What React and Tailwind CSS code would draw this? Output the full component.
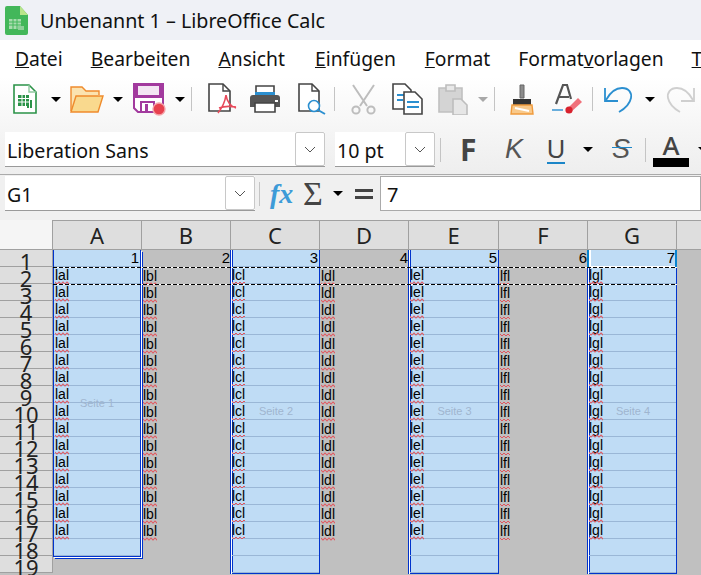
const COLS = [
  { id: 'A', w: 'w-[89px]', num: 1, page: 18, txt: 'lal', label: 'Seite 1' },
  { id: 'B', w: 'w-[89px]', num: 2, txt: 'lbl' },
  { id: 'C', w: 'w-[89px]', num: 3, page: 19, txt: 'lcl', label: 'Seite 2' },
  { id: 'D', w: 'w-[89px]', num: 4, txt: 'ldl' },
  { id: 'E', w: 'w-[90px]', num: 5, page: 19, txt: 'lel', label: 'Seite 3' },
  { id: 'F', w: 'w-[89px]', num: 6, txt: 'lfl' },
  { id: 'G', w: 'w-[89px]', num: 7, page: 19, txt: 'lgl', label: 'Seite 4', active: true },
]

const ROWS = Array.from({ length: 19 }, (_, i) => i + 1)

const Arrow = ({ className = '', color = 'border-t-black' }) => (
  <span className={`h-0 w-0 shrink-0 border-x-[5px] border-t-[5px] border-x-transparent ${color} ${className}`} />
)

const Sep = ({ className = '' }) => <span className={`h-[24px] w-px shrink-0 bg-[#c4c4c4] ${className}`} />

function Chevron() {
  return (
    <svg width="12" height="7" viewBox="0 0 12 7" fill="none" stroke="#555" strokeWidth="1">
      <path d="M1 1l5 5 5-5" />
    </svg>
  )
}

function Combo({ value, className }) {
  return (
    <div className={`flex h-[35px] shrink-0 items-stretch border-b border-[#9a9a9a] bg-white ${className}`}>
      <span className="flex-1 pl-[2px] text-[19.6px] leading-[38px] text-[#111]">{value}</span>
      <span className="flex w-[30px] items-center justify-center rounded-[2px] border border-[#c8c8c8] bg-white">
        <Chevron />
      </span>
    </div>
  )
}

function CalcLogo() {
  return (
    <svg width="23" height="29" viewBox="0 0 23 29" className="shrink-0">
      <path d="M2 0h13l8 9v18a2 2 0 0 1-2 2H2a2 2 0 0 1-2-2V2a2 2 0 0 1 2-2z" fill="#43b75a" />
      <path d="M15 0l8 9h-8z" fill="#b9e58a" />
      <path d="M4 13h12v10H4z" fill="#a8dcae" />
      <path d="M4 16h12M4 19h12M8 13v10M12 13v10" stroke="#43b75a" strokeWidth="1" />
      <path d="M13 20h6v4h-6z" fill="#8fd09a" />
    </svg>
  )
}

function NewCalc() {
  return (
    <svg width="25" height="30" viewBox="0 0 25 30" fill="none" className="shrink-0">
      <path d="M1 1h15l7 7v21H1z" fill="#fff" stroke="#2b9348" strokeWidth="1.6" />
      <path d="M16 1v7h7" stroke="#8fc89e" strokeWidth="1.4" />
      <path d="M5 11h11v11H5z" fill="#2b9348" />
      <path d="M5 14.5h11M5 18h11M9 11v11M12.5 11v11" stroke="#fff" />
      <path d="M14 24v-5h2v5zM17 24v-8h2v8z" fill="#2b9348" />
    </svg>
  )
}

function Folder() {
  return (
    <svg width="34" height="28" viewBox="0 0 34 28" fill="none" className="shrink-0">
      <path d="M1 26V2h11l4 4h13v4" stroke="#ef8b2c" strokeWidth="1.4" fill="#fbe3b0" />
      <path d="M1 27L6 11h27l-5 16z" fill="#f9d98e" stroke="#ef8b2c" strokeWidth="1.4" />
    </svg>
  )
}

function Save() {
  return (
    <svg width="33" height="33" viewBox="0 0 33 33" fill="none" className="shrink-0">
      <path d="M1 1h29v28H5l-4-4z" fill="#fff" stroke="#a23a9e" strokeWidth="2" />
      <path d="M1 1h29v14H1z" fill="#a23a9e" />
      <path d="M5 3h21v9H5z" fill="#f3e6f3" />
      <path d="M8 19h13v10H8z" stroke="#a23a9e" strokeWidth="2" />
      <path d="M12 21h3v7h-3z" fill="#a23a9e" />
      <circle cx="26" cy="26" r="6" fill="#e8414e" stroke="#f4a3a8" strokeWidth="1.4" />
    </svg>
  )
}

function Pdf() {
  return (
    <svg width="30" height="32" viewBox="0 0 30 32" fill="none" className="shrink-0">
      <path d="M2 1h14l7 7v20H2z" fill="#fff" stroke="#444" strokeWidth="1.6" />
      <path d="M16 1v7h7" stroke="#444" strokeWidth="1.4" />
      <path d="M19 12c-1 7-4 13-8 18M19 12c1 7 4 11 10 13M12 25c5-2 11-2 17-1" stroke="#e8495a" strokeWidth="1.6" />
    </svg>
  )
}

function Printer() {
  return (
    <svg width="32" height="28" viewBox="0 0 32 28" fill="none" className="shrink-0">
      <path d="M7 1h18v9H7z" fill="#fff" stroke="#444" strokeWidth="1.6" />
      <path d="M6 7h20v4H6z" fill="#2b8fd0" />
      <path d="M1 13a3 3 0 0 1 3-3h24a3 3 0 0 1 3 3v9H1z" fill="#555" />
      <path d="M6 18h20v9H6z" fill="#fff" stroke="#444" strokeWidth="1.6" />
      <path d="M26 15h3v2h-3z" fill="#fff" />
    </svg>
  )
}

function Preview() {
  return (
    <svg width="30" height="32" viewBox="0 0 30 32" fill="none" className="shrink-0">
      <path d="M2 1h13l7 7v20H2z" fill="#fff" stroke="#444" strokeWidth="1.6" />
      <path d="M15 1v7h7" stroke="#444" strokeWidth="1.4" />
      <circle cx="17" cy="23" r="5.5" fill="#fff" stroke="#2b8fd0" strokeWidth="1.6" />
      <path d="M21 27l7 4" stroke="#2b8fd0" strokeWidth="2" />
    </svg>
  )
}

function Scissors() {
  return (
    <svg width="25" height="31" viewBox="0 0 25 31" fill="none" stroke="#bdbdbd" strokeWidth="2" className="shrink-0">
      <path d="M2 1l14 21M23 1L9 22" />
      <circle cx="5" cy="26" r="3.6" />
      <circle cx="20" cy="26" r="3.6" />
    </svg>
  )
}

function Copy() {
  return (
    <svg width="31" height="32" viewBox="0 0 31 32" fill="none" className="shrink-0">
      <path d="M1 1h12l6 6v19H1z" fill="#fff" stroke="#444" strokeWidth="1.6" />
      <path d="M5 12h9M5 17h6" stroke="#2b8fd0" strokeWidth="2" />
      <path d="M12 9h11l7 7v15H12z" fill="#fff" stroke="#444" strokeWidth="1.6" />
      <path d="M15 19h12M15 24h12" stroke="#2b8fd0" strokeWidth="2" />
    </svg>
  )
}

function Paste() {
  return (
    <svg width="30" height="31" viewBox="0 0 30 31" fill="none" className="shrink-0">
      <path d="M1 4h23v24H1z" fill="#d4d4d4" stroke="#c0c0c0" strokeWidth="1.6" />
      <path d="M8 1h9v6H8z" fill="#e8e8e8" stroke="#bdbdbd" strokeWidth="1.6" />
      <path d="M15 15h8l6 6v10H15z" fill="#e6e6e6" stroke="#bdbdbd" strokeWidth="1.6" />
    </svg>
  )
}

function Brush() {
  return (
    <svg width="24" height="31" viewBox="0 0 24 31" fill="none" className="shrink-0">
      <path d="M10 1h4v13h-4z" fill="#8c8c8c" stroke="#666" />
      <path d="M3 15h18v6H3z" fill="#333" />
      <path d="M2 21h20l1 9H1z" fill="#f9c98a" stroke="#ef9a3c" strokeWidth="1.4" />
      <path d="M5 24l14 3" stroke="#fff" strokeWidth="2" />
    </svg>
  )
}

function ClearFormat() {
  return (
    <svg width="31" height="32" viewBox="0 0 31 32" fill="none" className="shrink-0">
      <path d="M4 21L11 2h4l4 14M7 14h10" stroke="#555" strokeWidth="2.2" />
      <path d="M0 27h11" stroke="#2b8fd0" strokeWidth="1.4" />
      <path d="M15 26l11-11 4 4-11 10z" fill="#f0707a" />
      <circle cx="17" cy="27" r="3.6" fill="#d8222e" />
    </svg>
  )
}

function Undo({ stroke = '#2b8fd0', flip = false }) {
  return (
    <svg width="29" height="27" viewBox="0 0 29 27" fill="none" stroke={stroke} strokeWidth="1.8" className={`shrink-0 ${flip ? '-scale-x-100' : ''}`}>
      <path d="M1 2v13h13" />
      <path d="M2 14C7 5 12 2 18 2c7 0 10 5 9 10-1 5-5 10-12 14" />
    </svg>
  )
}

// spell check squiggle under the cell text
function Squiggle() {
  return (
    <svg className="absolute left-0 top-[13px] h-[4px] w-full" viewBox="0 0 14 4" preserveAspectRatio="xMinYMin slice" fill="none" stroke="#e2545c">
      <path d="M0 1l2 2 2-2 2 2 2-2 2 2 2-2 2 2 2-2" />
    </svg>
  )
}

function Column({ col }) {
  const count = col.page || 19
  const rows = ROWS.slice(0, count).map(r => (
    <div
      key={r}
      className={`flex h-[17px] items-center whitespace-nowrap font-['Liberation_Sans',sans-serif] text-[14px] text-black ${
        col.page ? 'border-b border-[#9ab7d6]' : ''
      } ${r === 1 ? 'justify-end pr-[1px]' : col.page && col.id !== 'A' ? '-ml-px' : 'pl-px'}`}
    >
      {r === 1 && <span className="text-[15px]">{col.num}</span>}
      {r > 1 && r < 18 && (
        <span className="relative leading-none">
          {col.txt}
          <Squiggle />
        </span>
      )}
    </div>
  ))
  if (!col.page) return <div>{rows}</div>
  return (
    <div
      className={`relative border-x border-b border-[#0033cc] bg-[#bfdcf5] ${
        col.id === 'A'
          ? 'mr-px shadow-[1px_1px_0_#fff,2px_2px_0_#0033cc]'
          : 'ml-px shadow-[-1px_0_0_#fff,-2px_0_0_#0033cc]'
      }`}
    >
      {rows}
      <span className="absolute inset-0 flex items-center justify-center font-['Liberation_Sans',sans-serif] text-[11px] text-[#9fb5cf]">
        {col.label}
      </span>
      {col.active && (
        <span className="absolute -left-[3px] -right-px top-0 h-[17px] border-x-2 border-[#0a84d0] shadow-[inset_2px_-1px_0_#fff]" />
      )}
    </div>
  )
}

function Sheet() {
  return (
    <div className="relative flex h-[355px] items-start overflow-hidden bg-[#c0c0c0]">
      {/* row headers */}
      <div className="w-[53px] shrink-0 bg-[#dedede]">
        <div className="h-[30px] border-b border-r border-[#a0a0a0] bg-[#f5f5f5]" />
        {ROWS.map(r => (
          <div key={r} className="h-[17px] border-b border-r border-[#a0a0a0] text-center text-[22px] leading-[23px] text-[#222]">
            {r}
          </div>
        ))}
      </div>
      {COLS.map(col => (
        <div key={col.id} className={`${col.w} shrink-0`}>
          <div className="flex h-[30px] items-center justify-center border-y border-r border-[#a0a0a0] bg-[#dedede] text-[22px] text-[#222]">
            {col.id}
          </div>
          <Column col={col} />
        </div>
      ))}
      <div className="h-[30px] flex-1 border-y border-[#a0a0a0] bg-[#dedede]" />
      <div className="absolute left-[53px] top-[47px] h-px w-[624px] bg-[repeating-linear-gradient(90deg,#000_0_4px,#fff_4px_6px)]" />
      <div className="absolute left-[53px] top-[64px] h-px w-[624px] bg-[repeating-linear-gradient(90deg,#000_0_4px,#fff_4px_6px)]" />
    </div>
  )
}

export default function App() {
  return (
    <div className="h-[575px] w-[701px] overflow-hidden bg-white font-['Noto_Sans',sans-serif] text-[#111]">
      {/* title bar */}
      <div className="flex h-[40px] items-center gap-[12px] bg-[#eff1f6] pl-[5px] text-[19.7px]">
        <CalcLogo />
        <span className="pt-[2px]">Unbenannt 1 – LibreOffice Calc</span>
      </div>

      {/* menu */}
      <div className="flex h-[37px] items-center gap-[28px] overflow-hidden whitespace-nowrap pl-[15px] pt-[2px] text-[19.3px]">
        <span><u>D</u>atei</span>
        <span><u>B</u>earbeiten</span>
        <span><u>A</u>nsicht</span>
        <span className="ml-[2px]"><u>E</u>infügen</span>
        <span className="ml-px"><u>F</u>ormat</span>
        <span>Format<u>v</u>orlagen</span>
        <span><u>T</u></span>
      </div>

      {/* standard toolbar */}
      <div className="flex h-[48px] items-center overflow-hidden bg-gradient-to-b from-white to-[#f6f6f6] pb-1 pl-[13px]">
        <NewCalc />
        <Arrow className="ml-[13px]" />
        <span className="ml-[9px]"><Folder /></span>
        <Arrow className="ml-[9px]" />
        <span className="ml-[10px]"><Save /></span>
        <Arrow className="ml-[9px]" />
        <Sep className="ml-[6px]" />
        <span className="ml-[15px]"><Pdf /></span>
        <span className="ml-[12px]"><Printer /></span>
        <span className="ml-[16px]"><Preview /></span>
        <Sep className="ml-[7px]" />
        <span className="ml-[16px]"><Scissors /></span>
        <span className="ml-[16px]"><Copy /></span>
        <span className="ml-[15px]"><Paste /></span>
        <Arrow className="ml-[10px]" color="border-t-[#a8a8a8]" />
        <Sep className="ml-[6px]" />
        <span className="ml-[15px]"><Brush /></span>
        <span className="ml-[18px]"><ClearFormat /></span>
        <Sep className="ml-[9px]" />
        <span className="ml-[11px]"><Undo /></span>
        <Arrow className="ml-[12px]" />
        <span className="ml-[11px]"><Undo stroke="#cfcfcf" flip /></span>
      </div>

      {/* formatting toolbar */}
      <div className="flex h-[50px] items-center overflow-hidden border-b border-[#aaa] bg-gradient-to-b from-[#f6f6f6] to-[#eeeeee] pl-[5px]">
        <Combo value="Liberation Sans" className="w-[320px]" />
        <Combo value="10 pt" className="ml-[10px] w-[100px]" />
        <Sep className="ml-[5px]" />
        <span className="ml-[19px] w-[16px] text-[30px] font-bold leading-none text-[#444]">F</span>
        <span className="ml-[29px] w-[16px] font-['Liberation_Sans',sans-serif] text-[27px] italic leading-none text-[#555]">K</span>
        <span className="ml-[26px] flex w-[18px] flex-col items-center border-b-[2px] border-[#1c86c8] text-[26px] leading-[27px] text-[#444]">U</span>
        <Arrow className="ml-[18px]" />
        <span className="relative ml-[19px] w-[20px] text-center font-['Liberation_Sans',sans-serif] text-[27px] italic leading-none text-[#555]">
          S
          <span className="absolute left-0 top-[11px] h-px w-[20px] bg-[#1c86c8]" />
        </span>
        <Sep className="ml-[15px]" />
        <span className="ml-[7px] flex w-[36px] flex-col items-center pt-px">
          <span className="text-[26px] font-medium leading-[25px] text-[#444]">A</span>
          <span className="h-[9px] w-[36px] bg-black" />
        </span>
        <Arrow className="ml-[9px]" />
      </div>

      {/* formula bar */}
      <div className="flex h-[45px] items-center overflow-hidden bg-[#f0f0f0] pb-2 pl-[5px]">
        <Combo value="G1" className="w-[250px]" />
        <Sep className="ml-[4px]" />
        <span className="ml-[10px] w-[24px] font-['Liberation_Serif',serif] text-[28px] font-bold italic leading-none text-[#3d9bd8]">fx</span>
        <span className="ml-[9px] w-[19px] font-['Liberation_Serif',serif] text-[34px] leading-none text-[#444]">Σ</span>
        <Arrow className="ml-[11px]" />
        <span className="ml-[12px] flex w-[18px] flex-col gap-[4px]">
          <span className="h-[3px] bg-[#444]" />
          <span className="h-[3px] bg-[#444]" />
        </span>
        <div className="ml-[7px] h-[35px] flex-1 border border-[#aaa] bg-white pl-[6px] text-[20px] leading-[36px]">7</div>
      </div>

      <Sheet />
    </div>
  )
}
